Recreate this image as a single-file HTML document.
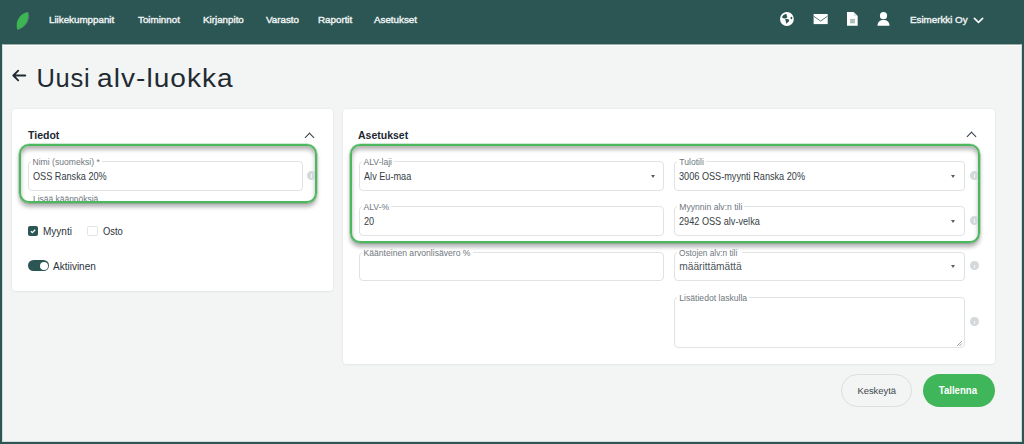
<!DOCTYPE html>
<html><head><meta charset="utf-8">
<style>
*{box-sizing:border-box;margin:0;padding:0}
html,body{width:1024px;height:444px;overflow:hidden;background:#2b5654;font-family:"Liberation Sans",sans-serif}
.page{position:absolute;left:2px;top:44px;width:1020px;height:398px;background:#f3f4f4;border-top:1px solid #98aead;border-left:1px solid #d3dcdc;border-right:1px solid #d3dcdc;border-bottom:1px solid #d3dcdc;box-shadow:inset 0 1px 0 #fdfefe}
.abs{position:absolute;white-space:nowrap}
.sx{display:inline-block;transform-origin:0 0;white-space:nowrap}
.nav{color:#eef2f2;font-size:9.7px;top:15.4px;line-height:10px;transform:scaleX(1.01);transform-origin:0 0;-webkit-text-stroke:.4px #eef2f2}
.card{position:absolute;background:#fff;border-radius:4px;box-shadow:0 0 3px rgba(0,40,50,.07),0 1px 2px rgba(0,0,0,.03)}
.h3{font-weight:bold;font-size:10.5px;color:#1e2830;line-height:12px}
.chev{position:absolute;width:7px;height:7px;border-left:1.4px solid #343d45;border-top:1.4px solid #343d45;transform:rotate(45deg)}
.field{position:absolute;border:1px solid #dfe3e4;border-radius:4px;background:#fff}
.lbl{position:absolute;top:-5px;left:2px;padding:0 2px;background:#fff;font-size:8.6px;color:#6f777d;line-height:10px;white-space:nowrap}
.val{position:absolute;left:4px;top:9px;font-size:10.4px;color:#353d44;white-space:nowrap;line-height:12px;transform:scaleX(.88);transform-origin:0 0}
.tri{position:absolute;top:12.8px;width:0;height:0;border-left:2.8px solid transparent;border-right:2.8px solid transparent;border-top:3.3px solid #575f65}
.info{position:absolute;width:9px;height:9px;border-radius:50%;background:#d3d8db}.info:after{content:"";position:absolute;left:4px;top:3.5px;width:1px;height:3.5px;background:#f4f6f7}
.green{position:absolute;border:2px solid #4bb85d;border-radius:10px;box-shadow:inset 0 3.5px 4px rgba(0,0,0,.3), 0 3.5px 4px rgba(0,0,0,.3), 0 0 0 .5px rgba(75,184,93,.5);overflow:hidden}
.btn{position:absolute;top:374px;height:32.5px;border-radius:17px;font-size:10.5px;line-height:31px;text-align:center}
.txt{position:absolute;font-size:10px;color:#2b333a;line-height:12px;white-space:nowrap}
</style></head><body>
<!-- nav -->
<svg class="abs" style="left:16px;top:11px" width="16" height="20" viewBox="0 0 16 20"><path d="M2.3 18.7 C-0.5 11 5 2.5 12.5 1.1 C15 8 10.5 16.5 2.3 18.7 Z" fill="#6a8486" opacity=".6"/><path d="M1.3 18.7 C-1.3 11 4 2.5 11.5 1.1 C14 8 9.5 16.5 1.3 18.7 Z" fill="#3db553"/></svg>
<div class="abs nav" style="left:49px">Liikekumppanit</div>
<div class="abs nav" style="left:137.5px">Toiminnot</div>
<div class="abs nav" style="left:202.5px">Kirjanpito</div>
<div class="abs nav" style="left:265.5px">Varasto</div>
<div class="abs nav" style="left:318px">Raportit</div>
<div class="abs nav" style="left:374px">Asetukset</div>
<div class="abs nav" style="left:910px">Esimerkki Oy</div>
<!-- icons -->
<svg class="abs" style="left:779px;top:12px" width="15" height="14" viewBox="0 0 15 14"><circle cx="7.9" cy="7" r="6.9" fill="#fff"/><path d="M3 4.9 L4.5 2.9 L6.5 2 L8.1 2.7 L7.6 4.1 L8.6 5.1 L7.2 6.2 L5.4 6.4 L3.6 6 Z" fill="#2b5654"/><path d="M6.2 6.7 L10.2 7.5 L9.8 9.3 L7.4 11.8 L6.6 9 Z" fill="#2b5654"/><ellipse cx="12.4" cy="6" rx="0.9" ry="1.3" fill="#2b5654"/></svg>
<svg class="abs" style="left:813px;top:14px" width="15" height="11" viewBox="0 0 15 11"><rect x="0.6" y="0" width="14.1" height="10.1" fill="#fff"/><path d="M0.7 2.2 L7.6 7.1 L14.4 2.2" stroke="#5d7a79" stroke-width="1" fill="none"/></svg>
<svg class="abs" style="left:847px;top:12px" width="11" height="14" viewBox="0 0 11 14"><path d="M0 0 H6.6 L10.7 4.1 V13.7 H0 Z" fill="#fff"/><path d="M6.6 0.3 V4.1 H10.4 Z" fill="#dfe6ea"/><rect x="3.1" y="6.9" width="4.8" height="4.4" fill="#a9b9b8"/><rect x="3.1" y="8.7" width="4.8" height=".7" fill="#c5d0cf"/></svg>
<svg class="abs" style="left:877px;top:12px" width="13" height="14" viewBox="0 0 13 14"><circle cx="6.5" cy="3.7" r="3.6" fill="#fff"/><path d="M0.5 13.8 C0.5 10 3 8 6.5 8 C10 8 12.5 10 12.5 13.8 Z" fill="#fff"/></svg>
<svg class="abs" style="left:972px;top:15.4px" width="14" height="10" viewBox="0 0 14 10"><path d="M2.4 3.3 L6.5 7.4 L10.6 3.3" stroke="#f4f7f7" stroke-width="1.7" stroke-linecap="round" stroke-linejoin="round" fill="none"/></svg>

<div class="page"></div>

<!-- heading -->
<svg class="abs" style="left:11px;top:69px" width="16" height="14" viewBox="0 0 16 14"><path d="M14.3 6.5H2.5M7.2 1.6L2.3 6.5l4.9 4.9" stroke="#1f2b33" stroke-width="1.8" stroke-linecap="round" stroke-linejoin="round" fill="none"/></svg>
<div class="abs" style="left:36.5px;top:63px;font-size:25.5px;color:#1f2b33;line-height:30px"><span class="sx" style="letter-spacing:0.7px">Uusi</span><span class="sx" style="position:absolute;left:60.5px;transform:scaleX(1.1);letter-spacing:0.95px">alv-luokka</span></div>

<!-- left card -->
<div class="card" style="left:12px;top:109px;width:320.5px;height:182px"></div>
<div class="abs h3" style="left:28px;top:129px">Tiedot</div>
<div class="chev" style="left:306px;top:133.5px"></div>
<div class="field" style="left:27.5px;top:161px;width:275px;height:30px"><div class="lbl">Nimi (suomeksi) *</div><div class="val">OSS Ranska 20%</div></div>
<div class="green" style="left:19px;top:144px;width:298px;height:59px">
  <div class="info" style="left:286.4px;top:24.7px"></div>
  <div class="abs" style="left:11.6px;top:48.3px;font-size:8.8px;color:#6f777d;transform:scaleX(.96);transform-origin:0 0">Lisää käännöksiä</div>
</div>
<!-- checkboxes -->
<div class="abs" style="left:28px;top:225.5px;width:10px;height:10.3px;border-radius:2px;background:#2b5654"></div>
<svg class="abs" style="left:28px;top:225.5px" width="10" height="10" viewBox="0 0 10 10"><path d="M2.9 5.3 L4.4 6.7 L7.2 3.8" stroke="#fff" stroke-width="1.3" fill="none"/></svg>
<div class="txt" style="left:43px;top:226.3px">Myynti</div>
<div class="abs" style="left:87px;top:225.5px;width:10.5px;height:10.5px;border-radius:2px;border:1px solid #e1e5e7;background:#fff"></div>
<div class="txt" style="left:103px;top:226.3px"><span class="sx" style="transform:scaleX(.94)">Osto</span></div>
<div class="abs" style="left:28px;top:260.3px;width:20.5px;height:10.3px;border-radius:6px;background:#2b5654"></div>
<div class="abs" style="left:39.7px;top:261.5px;width:8px;height:8px;border-radius:50%;background:#fff"></div>
<div class="txt" style="left:53px;top:261.3px">Aktiivinen</div>

<!-- right card -->
<div class="card" style="left:343px;top:109px;width:651.5px;height:254.5px"></div>
<div class="abs h3" style="left:358px;top:129px">Asetukset</div>
<div class="chev" style="left:967.5px;top:133.3px"></div>

<div class="field" style="left:358.5px;top:161px;width:305px;height:30px"><div class="lbl">ALV-laji</div><div class="val">Alv Eu-maa</div><div class="tri" style="left:291.3px"></div></div>
<div class="field" style="left:358.5px;top:206px;width:305px;height:29.5px"><div class="lbl">ALV-%</div><div class="val">20</div></div>
<div class="field" style="left:674.3px;top:161px;width:290.5px;height:30px"><div class="lbl">Tulotili</div><div class="val">3006 OSS-myynti Ranska 20%</div><div class="tri" style="left:276.2px"></div></div>
<div class="field" style="left:674.3px;top:206px;width:290.5px;height:29.5px"><div class="lbl">Myynnin alv:n tili</div><div class="val">2942 OSS alv-velka</div><div class="tri" style="left:276.2px"></div></div>

<div class="field" style="left:358.5px;top:251.5px;width:305px;height:29px"><div class="lbl">Käänteinen arvonlisävero %</div></div>
<div class="field" style="left:674.3px;top:251.5px;width:290.5px;height:29px"><div class="lbl"><span class="sx" style="transform:scaleX(.96)">Ostojen alv:n tili</span></div><div class="val" style="font-size:10.2px;top:8.5px;color:#4d555b;transform:none">määrittämättä</div><div class="tri" style="left:276.2px"></div></div>
<div class="info" style="left:969.8px;top:261px"></div>
<div class="field" style="left:674.3px;top:297px;width:290.5px;height:51px"><div class="lbl">Lisätiedot laskulla</div>
<svg class="abs" style="left:281px;top:42px" width="7" height="7" viewBox="0 0 7 7"><path d="M6 1 L1 6 M6 3.5 L3.5 6" stroke="#8a9096" stroke-width=".8"/></svg></div>
<div class="info" style="left:969.8px;top:317.4px"></div>

<div class="green" style="left:349.5px;top:144px;width:630px;height:99px">
  <div class="info" style="left:618.5px;top:24.8px"></div>
  <div class="info" style="left:618.5px;top:69.8px"></div>
</div>

<!-- buttons -->
<div class="btn" style="left:841px;width:71px;border:1px solid #dadee0;color:#40484e;font-size:9.6px;line-height:31.5px"><span class="sx" style="transform:scaleX(.98);transform-origin:50% 0">Keskeytä</span></div>
<div class="btn" style="left:922.5px;width:72px;background:#40b65a;color:#fff;font-weight:bold;font-size:10px;line-height:33px"><span class="sx" style="transform:scaleX(.96);transform-origin:50% 0;margin-left:-1px">Tallenna</span></div>
</body></html>
